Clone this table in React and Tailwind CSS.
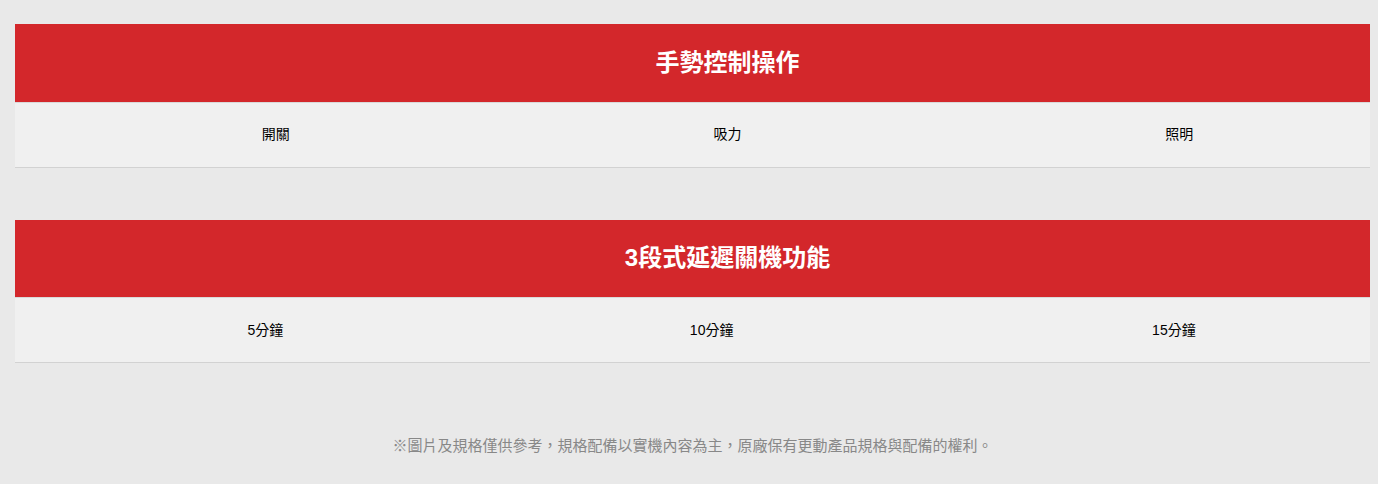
const font = { fontFamily: '"Liberation Sans", "Noto Sans CJK TC", sans-serif' };

const sections = [
  { title: "手勢控制操作", items: ["開關", "吸力", "照明"] },
  { title: "3段式延遲關機功能", items: ["5分鐘", "10分鐘", "15分鐘"] },
];

function SpecTable({ title, items }) {
  return (
    <table className="w-full mb-[52px] border-collapse">
      <thead>
        <tr>
          <th colSpan={3} className="h-[78px] bg-[#d3272b] pl-[70px] text-center text-[24px] font-bold text-white">
            {title}
          </th>
        </tr>
      </thead>
      <tbody>
        <tr className="h-[65px] bg-[#f0f0f0] border-t border-[#d9d9d9] border-b border-b-[#d2d2d2]">
          {items.map((item) => (
            <td key={item} className="pl-[70px] text-center text-[14px] text-black">
              {item}
            </td>
          ))}
        </tr>
      </tbody>
    </table>
  );
}

export default function App() {
  return (
    <div style={font} className="min-h-[484px] bg-[#e9e9e9] pt-[24px] pl-[15px] pr-[8px] pb-[20px]">
      {sections.map((s) => (
        <SpecTable key={s.title} title={s.title} items={s.items} />
      ))}
      <p className="mt-[72px] text-center text-[15px] text-[#888888]">
        ※圖片及規格僅供參考，規格配備以實機內容為主，原廠保有更動產品規格與配備的權利。
      </p>
    </div>
  );
}
